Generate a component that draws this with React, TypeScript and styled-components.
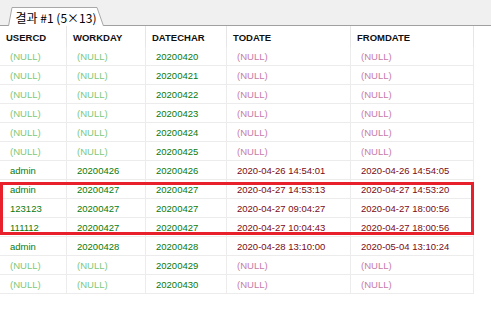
import React from 'react'
import styled, { createGlobalStyle } from 'styled-components'

type Tone = 'green' | 'red'

const GlobalStyle = createGlobalStyle`
  body {
    margin: 0;
    background: #ffffff;
    font-family: "Liberation Sans", Arial, sans-serif;
  }
`

const columns: { name: string; width: number; tone: Tone }[] = [
  { name: 'USERCD', width: 67, tone: 'green' },
  { name: 'WORKDAY', width: 79, tone: 'green' },
  { name: 'DATECHAR', width: 81, tone: 'green' },
  { name: 'TODATE', width: 124, tone: 'red' },
  { name: 'FROMDATE', width: 123, tone: 'red' },
]

type Row = (string | null)[]

const rows: Row[] = [
  [null, null, '20200420', null, null],
  [null, null, '20200421', null, null],
  [null, null, '20200422', null, null],
  [null, null, '20200423', null, null],
  [null, null, '20200424', null, null],
  [null, null, '20200425', null, null],
  ['admin', '20200426', '20200426', '2020-04-26 14:54:01', '2020-04-26 14:54:05'],
  ['admin', '20200427', '20200427', '2020-04-27 14:53:13', '2020-04-27 14:53:20'],
  ['123123', '20200427', '20200427', '2020-04-27 09:04:27', '2020-04-27 18:00:56'],
  ['111112', '20200427', '20200427', '2020-04-27 10:04:43', '2020-04-27 18:00:56'],
  ['admin', '20200428', '20200428', '2020-04-28 13:10:00', '2020-05-04 13:10:24'],
  [null, null, '20200429', null, null],
  [null, null, '20200430', null, null],
]

const markedFrom = 7
const markedTo = 10

const gridTemplate = columns.map((c) => `${c.width}px`).join(' ')

const Page = styled.div`
  width: 491px;
  height: 313px;
  overflow: hidden;
  background: #ffffff;
`

const TabStrip = styled.div`
  display: flex;
  align-items: flex-end;
  height: 26px;
  padding-left: 8px;
  background: #f0f0f0;
  border-bottom: 1px solid #a0a0a0;
  box-sizing: border-box;
`

const Tab = styled.div`
  position: relative;
  height: 19px;
  width: 96px;
  margin-bottom: -1px;
  display: flex;
  align-items: center;
  justify-content: center;
  font-family: "Noto Sans CJK KR", "Noto Sans", sans-serif;
  font-size: 12px;
  color: #000000;
`

const TabShape = styled.svg`
  position: absolute;
  inset: 0;
`

const TabLabel = styled.span`
  position: relative;
  padding-top: 1px;
`

const Grid = styled.div`
  width: 474px;
  font-size: 9.5px;
`

const HeaderRow = styled.div`
  display: grid;
  grid-template-columns: ${gridTemplate};
  height: 21px;
`

const HeaderCell = styled.div`
  display: flex;
  align-items: center;
  padding: 2px 0 0 6px;
  border-right: 1px solid #e6e6e6;
  font-weight: bold;
  color: #101010;
  white-space: nowrap;
`

const DataRow = styled.div`
  display: grid;
  grid-template-columns: ${gridTemplate};
  height: 19px;
`

const Cell = styled.div<{ $tone: Tone; $null: boolean }>`
  display: flex;
  align-items: center;
  padding-left: 10px;
  border-right: 1px solid #ececec;
  border-bottom: 1px solid #ececec;
  white-space: nowrap;
  color: ${({ $tone, $null }) =>
    $tone === 'green' ? ($null ? '#7cc87c' : '#0a7a0a') : $null ? '#c77aa8' : '#7a0a14'};
`

const Marked = styled.div`
  position: relative;

  &::after {
    content: '';
    position: absolute;
    left: 0;
    right: 0;
    top: 2px;
    bottom: 2px;
    border: 3px solid #e8202c;
    pointer-events: none;
  }
`

const renderRow = (row: Row, i: number) => (
  <DataRow key={i}>
    {row.map((value, c) => (
      <Cell key={c} $tone={columns[c].tone} $null={value === null}>
        {value ?? '(NULL)'}
      </Cell>
    ))}
  </DataRow>
)

const App = (): JSX.Element => (
  <Page>
    <GlobalStyle />
    <TabStrip>
      <Tab>
        <TabShape width="96" height="19" viewBox="0 0 96 19">
          <path d="M0.5 19 L4 0.5 L89 0.5 L95.5 19" fill="#ffffff" stroke="#a8a8a8" />
        </TabShape>
        <TabLabel>결과 #1 (5×13)</TabLabel>
      </Tab>
    </TabStrip>
    <Grid>
      <HeaderRow>
        {columns.map((c) => (
          <HeaderCell key={c.name}>{c.name}</HeaderCell>
        ))}
      </HeaderRow>
      {rows.slice(0, markedFrom).map((r, i) => renderRow(r, i))}
      <Marked>{rows.slice(markedFrom, markedTo).map((r, i) => renderRow(r, i + markedFrom))}</Marked>
      {rows.slice(markedTo).map((r, i) => renderRow(r, i + markedTo))}
    </Grid>
  </Page>
)

export default App
